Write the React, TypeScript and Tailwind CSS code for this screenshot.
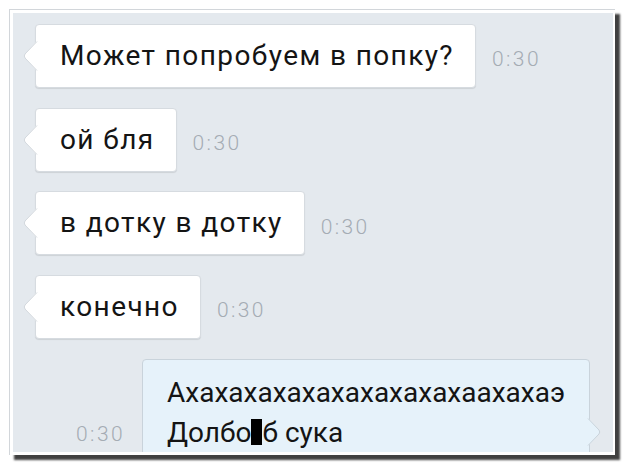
import React from "react";

function LeftTail() {
  return (
    <svg
      className="absolute left-[-13px] top-1/2 -translate-y-1/2"
      width="15"
      height="30"
      viewBox="0 0 15 30"
    >
      <path d="M15 0 L14 0 L2 13 Q0.5 15 2 17 L14 30 L15 30 Z" fill="#ffffff" />
      <path d="M14 0.5 L2 13 Q0.5 15 2 17 L14 29.5" fill="none" stroke="#d3d8dd" strokeWidth="1" />
    </svg>
  );
}

function RightTail() {
  return (
    <svg className="absolute right-[-12px] top-[58px]" width="14" height="28" viewBox="0 0 14 28">
      <path d="M0 0 L1 0 L12 12 Q13.5 14 12 16 L1 28 L0 28 Z" fill="#e6f2fa" />
      <path d="M1 0.5 L12 12 Q13.5 14 12 16 L1 27.5" fill="none" stroke="#c9d3db" strokeWidth="1" />
    </svg>
  );
}

function Incoming(props: { text: string }) {
  return (
    <div className="flex items-center gap-4">
      <div className="relative flex h-16 items-center rounded-[4px] border border-[#d6dbe0] bg-white pl-6 pr-[21px] text-[28px] tracking-[1.4px] text-[#141414] shadow-[0_1px_1px_rgba(0,0,0,0.1)]">
        <LeftTail />
        <span className="whitespace-nowrap">{props.text}</span>
      </div>
      <span className="mt-2 text-[21px] font-light tracking-[2.4px] text-[#a5acb4]">0:30</span>
    </div>
  );
}

export default function App() {
  return (
    <div className="h-[465px] w-[627px] bg-white pl-[9px] pt-[9px] font-['Roboto',sans-serif]">
      <div className="w-[606px] border-l border-t border-[#d2d6da] bg-white pb-[3px] pl-[3px] pr-[2px] pt-[3px] shadow-[5px_5px_2px_rgba(0,0,0,0.75)]">
        <div className="flex h-[439px] flex-col gap-[19.7px] overflow-hidden bg-[#e4e9ee] pl-[22px] pr-[23px] pt-[11px]">
          <Incoming text="Может попробуем в попку?" />
          <Incoming text="ой бля" />
          <Incoming text="в дотку в дотку" />
          <Incoming text="конечно" />
          <div className="flex items-start justify-end gap-[17px]">
            <span className="mt-[60px] text-[21px] font-light tracking-[2.4px] text-[#a5acb4]">0:30</span>
            <div className="relative h-[110px] w-[448px] shrink-0 rounded-[4px] border border-[#c9d3db] bg-[#e6f2fa] px-6 pt-[13px] text-[28px] leading-[40px] text-[#141414]">
              <RightTail />
              <div className="whitespace-nowrap">Ахахахахахахахахахахаахахаэ</div>
              <div className="whitespace-nowrap">
                Долбо<span className="inline-block h-[26px] w-[11px] translate-y-[3px] bg-black" />б сука
              </div>
            </div>
          </div>
        </div>
      </div>
    </div>
  );
}
